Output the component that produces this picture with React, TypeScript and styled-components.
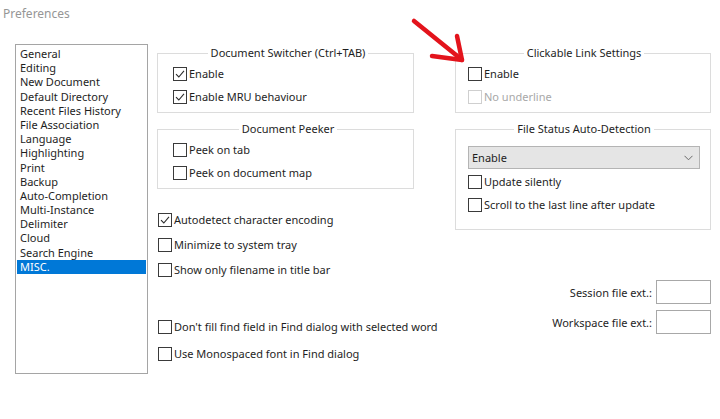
import React from 'react';
import styled, { createGlobalStyle } from 'styled-components';

const GlobalStyle = createGlobalStyle`
  html, body {
    margin: 0;
    padding: 0;
    background: #fff;
  }
  body {
    font-family: 'Noto Sans', 'Open Sans', sans-serif;
    font-size: 11px;
    color: #1e1e1e;
  }
  * {
    box-sizing: border-box;
  }
`;

const Window = styled.div`
  position: relative;
  width: 720px;
  height: 419px;
  overflow: hidden;
`;

const Caption = styled.div`
  height: 44px;
  padding: 6px 0 0 3px;
  font-size: 12px;
  line-height: 16px;
  color: #969696;
`;

const Body = styled.div`
  display: flex;
  align-items: flex-start;
  padding-left: 15px;
`;

const CategoryList = styled.div`
  width: 133px;
  height: 330px;
  padding: 2px 1px;
  border: 1px solid #a5a5a5;
  background: #fff;
`;

const CategoryItem = styled.div<{ $selected?: boolean }>`
  height: 14.2px;
  padding-left: 3px;
  line-height: 14.2px;
  white-space: nowrap;
  color: ${(p) => (p.$selected ? '#fff' : '#1e1e1e')};
  background: ${(p) => (p.$selected ? '#0078d7' : 'transparent')};
`;

const Content = styled.div`
  display: flex;
  gap: 41px;
  margin: 1px 0 0 9px;
`;

const Column = styled.div<{ $width: number }>`
  display: flex;
  flex-direction: column;
  width: ${(p) => p.$width}px;
`;

const Group = styled.fieldset<{ $inset: number; $bottom?: number; $top?: number }>`
  display: flex;
  flex-direction: column;
  gap: 9px;
  min-width: 0;
  margin: 0;
  padding: ${(p) => p.$top ?? 6}px 10px ${(p) => p.$bottom ?? 8}px ${(p) => p.$inset}px;
  border: 1px solid #dcdcdc;

  & + & {
    margin-top: 8px;
  }
`;

const GroupTitle = styled.legend`
  margin: 0 auto;
  padding: 0 3px;
  font-size: 11px;
  line-height: 16px;
  color: #1e1e1e;
`;

const Stack = styled.div<{ $gap: number; $top: number }>`
  display: flex;
  flex-direction: column;
  gap: ${(p) => p.$gap}px;
  margin-top: ${(p) => p.$top}px;
  padding-left: 1px;
`;

const CheckRow = styled.label<{ $disabled?: boolean }>`
  display: flex;
  align-items: center;
  gap: 2px;
  height: 14px;
  line-height: 14px;
  white-space: nowrap;
  color: ${(p) => (p.$disabled ? '#a8a8a8' : '#1e1e1e')};
`;

const Box = styled.span<{ $disabled?: boolean }>`
  display: flex;
  align-items: center;
  justify-content: center;
  width: 14px;
  height: 14px;
  flex: none;
  border: 1px solid ${(p) => (p.$disabled ? '#cfcfcf' : '#3a3a3a')};
  background: #fff;
`;

const Combo = styled.div`
  display: flex;
  align-items: center;
  justify-content: space-between;
  height: 23px;
  margin-bottom: -3px;
  padding: 0 6px 0 3px;
  border: 1px solid #b4b4b4;
  background: #e5e5e5;
`;

const FieldRows = styled.div`
  display: flex;
  flex-direction: column;
  align-items: flex-end;
  gap: 6px;
  margin-top: 50px;
`;

const FieldRow = styled.label`
  display: flex;
  align-items: center;
  gap: 4px;
  white-space: nowrap;
`;

const TextInput = styled.div`
  width: 55px;
  height: 24px;
  border: 1px solid #a8a8a8;
  background: #fff;
`;

const Annotation = styled.svg`
  position: absolute;
  left: 0;
  top: 0;
  pointer-events: none;
`;

const categories = [
  'General',
  'Editing',
  'New Document',
  'Default Directory',
  'Recent Files History',
  'File Association',
  'Language',
  'Highlighting',
  'Print',
  'Backup',
  'Auto-Completion',
  'Multi-Instance',
  'Delimiter',
  'Cloud',
  'Search Engine',
  'MISC.',
];

function Check({ label, checked, disabled }: { label: string; checked?: boolean; disabled?: boolean }) {
  return (
    <CheckRow $disabled={disabled}>
      <Box $disabled={disabled}>
        {checked && (
          <svg width="10" height="10" viewBox="0 0 10 10">
            <polyline points="1,5.2 3.8,8 9,1.8" fill="none" stroke="#2b2b2b" strokeWidth="1.1" />
          </svg>
        )}
      </Box>
      {label}
    </CheckRow>
  );
}

export default function App() {
  return (
    <Window>
      <GlobalStyle />
      <Caption>Preferences</Caption>
      <Body>
        <CategoryList>
          {categories.map((c) => (
            <CategoryItem key={c} $selected={c === 'MISC.'}>
              {c}
            </CategoryItem>
          ))}
        </CategoryList>
        <Content>
          <Column $width={257}>
            <Group $inset={15}>
              <GroupTitle>Document Switcher (Ctrl+TAB)</GroupTitle>
              <Check label="Enable" checked />
              <Check label="Enable MRU behaviour" checked />
            </Group>
            <Group $inset={15}>
              <GroupTitle>Document Peeker</GroupTitle>
              <Check label="Peek on tab" />
              <Check label="Peek on document map" />
            </Group>
            <Stack $gap={11} $top={24}>
              <Check label="Autodetect character encoding" checked />
              <Check label="Minimize to system tray" />
              <Check label="Show only filename in title bar" />
            </Stack>
            <Stack $gap={13} $top={43}>
              <Check label="Don't fill find field in Find dialog with selected word" />
              <Check label="Use Monospaced font in Find dialog" />
            </Stack>
          </Column>
          <Column $width={256}>
            <Group $inset={12}>
              <GroupTitle>Clickable Link Settings</GroupTitle>
              <Check label="Enable" />
              <Check label="No underline" disabled />
            </Group>
            <Group $inset={12} $top={9} $bottom={17}>
              <GroupTitle>File Status Auto-Detection</GroupTitle>
              <Combo>
                Enable
                <svg width="9" height="6" viewBox="0 0 9 6">
                  <polyline points="0.5,0.8 4.5,4.8 8.5,0.8" fill="none" stroke="#6a6a6a" strokeWidth="1" />
                </svg>
              </Combo>
              <Check label="Update silently" />
              <Check label="Scroll to the last line after update" />
            </Group>
            <FieldRows>
              <FieldRow>
                Session file ext.:
                <TextInput />
              </FieldRow>
              <FieldRow>
                Workspace file ext.:
                <TextInput />
              </FieldRow>
            </FieldRows>
          </Column>
        </Content>
      </Body>
      <Annotation width="720" height="419">
        <g stroke="#e3141c" strokeWidth="4.5" strokeLinecap="round" fill="none">
          <line x1="414" y1="21" x2="461" y2="59" />
          <line x1="457" y1="36" x2="462" y2="60" />
          <line x1="432" y1="56" x2="462" y2="60" />
        </g>
      </Annotation>
    </Window>
  );
}
